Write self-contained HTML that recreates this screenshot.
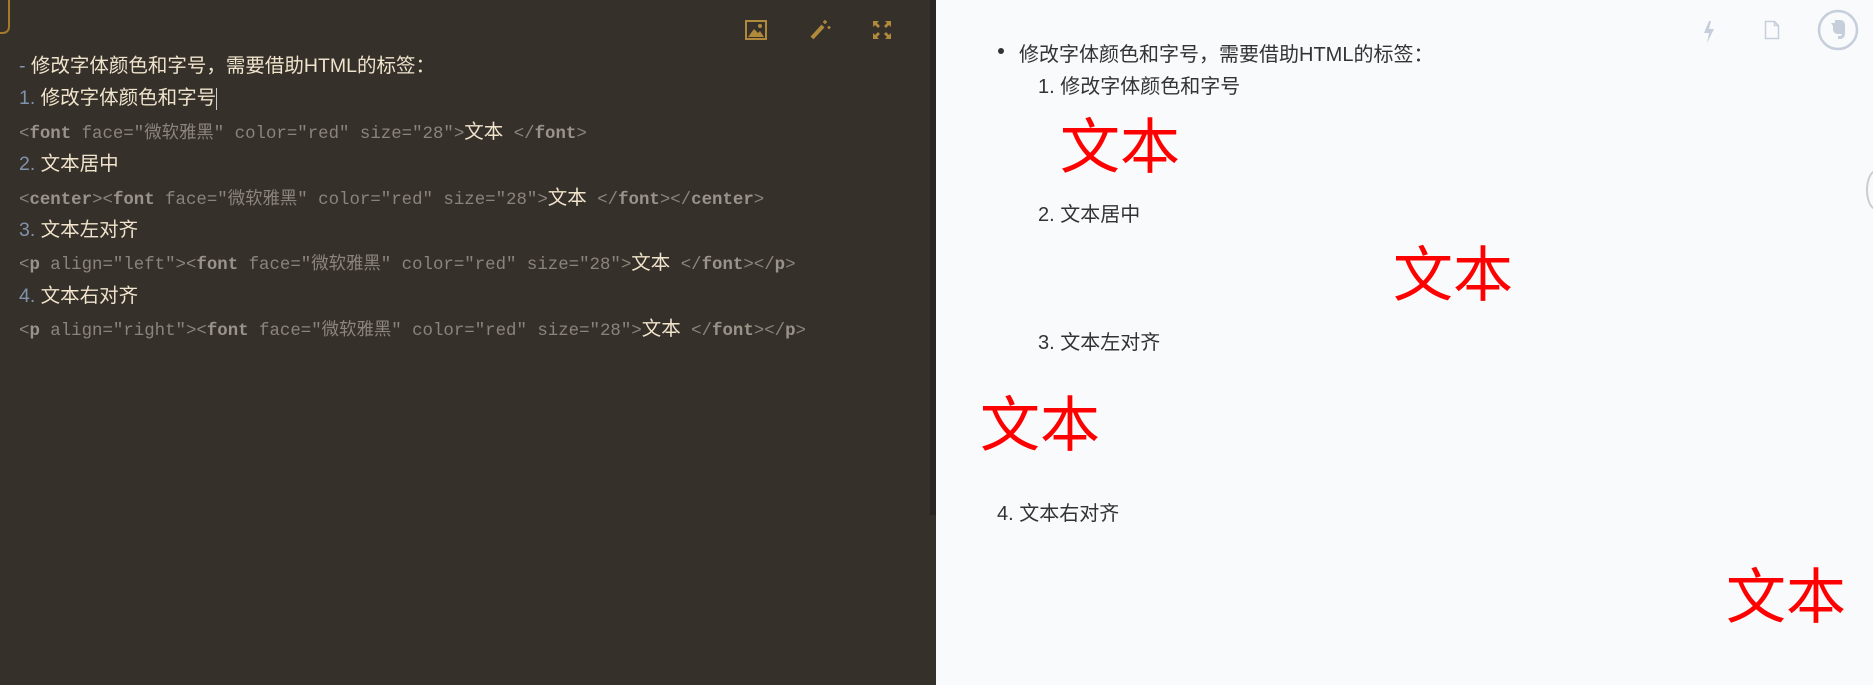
<!DOCTYPE html>
<html><head><meta charset="utf-8"><style>
*{margin:0;padding:0;box-sizing:border-box}
body{width:1873px;height:685px;overflow:hidden;position:relative;background:#f8fafc;font-family:"Liberation Sans","Noto Sans CJK SC",sans-serif}
#left{position:absolute;left:0;top:0;width:930px;height:685px;background:#36302b}
#sb{position:absolute;left:930px;top:0;width:6px;height:515px;background:#2a2522}
#sb2{position:absolute;left:930px;top:515px;width:6px;height:170px;background:#36302b}
.l{position:absolute;left:19px;white-space:nowrap}
.h{font-size:19.5px;color:#f0e4cc;font-family:"Liberation Sans","Noto Sans CJK SC",sans-serif}
.n{color:#7f93ac}
.c{font-size:17.4px;color:#8b847b;font-family:"Liberation Mono","Noto Sans CJK SC",monospace}
.c b{font-weight:bold;color:#9a938a}
.c .w{color:#f0e4cc;font-family:"Liberation Sans","Noto Sans CJK SC",sans-serif;font-size:19.5px}
.r{position:absolute;white-space:nowrap;font-size:20px;color:#333}
.big{position:absolute;color:#ff0000;font-size:60px;line-height:1;font-family:"Liberation Sans","Noto Sans CJK SC",sans-serif;white-space:nowrap}
</style></head><body>
<div id="left"></div><div id="sb"></div><div id="sb2"></div>
<div style="position:absolute;left:-12px;top:-6px;width:22px;height:40px;border:2px solid #a47a2a;border-radius:7px"></div>
<svg style="position:absolute;left:745px;top:20px" width="22" height="20" viewBox="0 0 22 20"><rect x="1" y="1" width="20" height="18" fill="none" stroke="#b08a3a" stroke-width="2"/><path d="M3 17 L9 9 L13 13 L15 11 L19 17Z" fill="#b08a3a"/><circle cx="15" cy="6" r="2" fill="#b08a3a"/></svg>
<svg style="position:absolute;left:809px;top:18px" width="22" height="22" viewBox="0 0 22 22"><path d="M3 20 L14 8" stroke="#b08a3a" stroke-width="4"/><path d="M16 2v4M14 4h4M20 8v3M18.5 9.5h3" stroke="#b08a3a" stroke-width="1.5"/></svg>
<svg style="position:absolute;left:872px;top:20px" width="20" height="20" viewBox="0 0 20 20" fill="#b08a3a"><path d="M1 1h6L5 3l3 3-2 2-3-3-2 2z"/><path d="M19 1v6l-2-2-3 3-2-2 3-3-2-2z"/><path d="M1 19v-6l2 2 3-3 2 2-3 3 2 2z"/><path d="M19 19h-6l2-2-3-3 2-2 3 3 2-2z"/></svg>
<div class="l h" style="top:49px"><span class="n">-</span> 修改字体颜色和字号，需要借助HTML的标签：</div>
<div class="l h" style="top:81px"><span class="n">1.</span> 修改字体颜色和字号<span style="display:inline-block;width:1px;height:22px;background:#ccc;vertical-align:middle"></span></div>
<div class="l c" style="top:115px">&lt;<b>font</b> face="微软雅黑" color="red" size="28"&gt;<span class="w">文本</span> &lt;/<b>font</b>&gt;</div>
<div class="l h" style="top:147px"><span class="n">2.</span> 文本居中</div>
<div class="l c" style="top:181px">&lt;<b>center</b>&gt;&lt;<b>font</b> face="微软雅黑" color="red" size="28"&gt;<span class="w">文本</span> &lt;/<b>font</b>&gt;&lt;/<b>center</b>&gt;</div>
<div class="l h" style="top:213px"><span class="n">3.</span> 文本左对齐</div>
<div class="l c" style="top:246px">&lt;<b>p</b> align="left"&gt;&lt;<b>font</b> face="微软雅黑" color="red" size="28"&gt;<span class="w">文本</span> &lt;/<b>font</b>&gt;&lt;/<b>p</b>&gt;</div>
<div class="l h" style="top:279px"><span class="n">4.</span> 文本右对齐</div>
<div class="l c" style="top:312px">&lt;<b>p</b> align="right"&gt;&lt;<b>font</b> face="微软雅黑" color="red" size="28"&gt;<span class="w">文本</span> &lt;/<b>font</b>&gt;&lt;/<b>p</b>&gt;</div>
<div style="position:absolute;left:998px;top:48px;width:6px;height:6px;border-radius:50%;background:#333"></div>
<div class="r" style="left:1019px;top:38px">修改字体颜色和字号，需要借助HTML的标签：</div>
<div class="r" style="left:1038px;top:70px">1. 修改字体颜色和字号</div>
<div class="big" style="left:1060px;top:118px">文本</div>
<div class="r" style="left:1038px;top:198px">2. 文本居中</div>
<div class="big" style="left:1393px;top:246px">文本</div>
<div class="r" style="left:1038px;top:326px">3. 文本左对齐</div>
<div class="big" style="left:980px;top:396px">文本</div>
<div class="r" style="left:997px;top:497px">4. 文本右对齐</div>
<div class="big" style="left:1726px;top:568px">文本</div>
<svg style="position:absolute;left:1702px;top:20px" width="14" height="24" viewBox="0 0 14 24"><path d="M7 1 L2 13 H7 L5 23 L12 9 H7 L9 1Z" fill="#c5ceda"/></svg>
<svg style="position:absolute;left:1764px;top:20px" width="16" height="20" viewBox="0 0 16 20"><path d="M1.5 1.5h9l4 4v13h-13z M10.5 1.5v4h4" fill="none" stroke="#c5ceda" stroke-width="1.5"/></svg>
<svg style="position:absolute;left:1817px;top:9px" width="42" height="42" viewBox="0 0 42 42"><circle cx="21" cy="21" r="19" fill="none" stroke="#c5ceda" stroke-width="2.5"/><path d="M14 14h4v-3h5c3 0 5 2 5 5v8c0 4-2 6-5 6h-2v-3h2c1 0 2-1 2-2h-4c-3 0-5-2-5-5v-3z" fill="#c5ceda"/></svg>
<div style="position:absolute;left:1866px;top:170px;width:20px;height:40px;border-radius:50%;border:2px solid #ccc"></div>
</body></html>
